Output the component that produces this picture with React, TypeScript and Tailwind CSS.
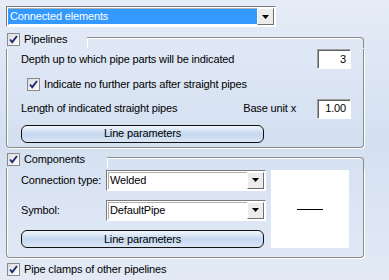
import React from "react";

const font = { fontFamily: '"Liberation Sans", Arial, sans-serif' };

const Check = ({ checked = true }: { checked?: boolean }) => (
    <span className="flex h-[13px] w-[13px] shrink-0 items-center justify-center border border-[#8a8a8a] bg-gradient-to-br from-[#dcdcdc] to-white">
        {checked && (
            <svg width="9" height="9" viewBox="0 0 9 9">
                <path d="M1 4.5 L3.2 7.2 L8 1" fill="none" stroke="#1f2a7a" strokeWidth="1.9" />
            </svg>
        )}
    </span>
);

const Arrow = () => (
    <span className="flex h-[17px] w-[17px] shrink-0 items-center justify-center border border-t-white border-l-white border-b-[#6f6f6f] border-r-[#6f6f6f] bg-[#ececec]">
        <svg width="7" height="4" viewBox="0 0 7 4">
            <path d="M0 0 H7 L3.5 4 Z" fill="#000" />
        </svg>
    </span>
);

const Combo = ({ value, width, selected }: { value: string; width: string; selected?: boolean }) => (
    <div className={`flex items-center border border-t-[#7a7a7a] border-l-[#7a7a7a] border-b-white border-r-white bg-white p-px ${width}`}>
        <div className="flex h-[17px] flex-1 items-center shadow-[inset_1px_1px_0_#b0b0b0]">
            <span className={`flex h-[15px] flex-1 items-center px-[2px] ${selected ? "bg-[#3399ff] text-white" : ""}`}>{value}</span>
        </div>
        <Arrow />
    </div>
);

const NumInput = ({ value }: { value: string }) => (
    <div className="flex h-[20px] w-[34px] items-center justify-end border border-t-[#a0a0a0] border-l-[#a0a0a0] border-b-white border-r-white bg-white pr-[4px] shadow-[inset_1px_1px_0_#606060]">
        {value}
    </div>
);

const LineButton = () => (
    <div className="flex h-[18px] w-[243px] items-center justify-center rounded-[6px] border border-[#111] bg-gradient-to-b from-[#f3f7fc] via-[#c4d7ef] to-[#dbe6f5]">
        Line parameters
    </div>
);

const GroupHeader = ({ label, labelWidth }: { label: string; labelWidth: string }) => (
    <div className="flex h-[18px]">
        <div className={`flex items-center gap-[4px] pl-[1px] ${labelWidth}`}>
            <Check />
            <span>{label}</span>
        </div>
        <div className="mt-[7px] flex-1 rounded-tr-[4px] border-t border-r border-[#8c8c8c] shadow-[inset_1px_1px_0_white]" />
    </div>
);

export default function App() {
    return (
        <div
            className="h-[280px] w-[389px] overflow-hidden bg-gradient-to-b from-[#e5ecf7] via-[#d4e0f1] to-[#e3eaf6] pl-[6px] pt-[6px] text-[11px] tracking-[-0.15px] text-black"
            style={font}
        >
            <Combo value="Connected elements" width="w-[270px]" selected />

            <div className="mt-[3px] w-[358px]">
                <GroupHeader label="Pipelines" labelWidth="w-[81px]" />
                <div className="h-[99px] rounded-b-[4px] border-x border-b border-[#8c8c8c] pl-[14px] pr-[12px] shadow-[1px_1px_0_white,inset_1px_0_0_white]">
                    <div className="mt-px flex h-[20px] items-center justify-between">
                        <span>Depth up to which pipe parts will be indicated</span>
                        <NumInput value="3" />
                    </div>
                    <div className="mt-[7px] flex items-center gap-[4px] pl-[6px]">
                        <Check />
                        <span>Indicate no further parts after straight pipes</span>
                    </div>
                    <div className="mt-[6px] flex h-[20px] items-center">
                        <span className="flex-1">Length of indicated straight pipes</span>
                        <span className="mr-[21px]">Base unit x</span>
                        <NumInput value="1.00" />
                    </div>
                    <div className="mt-[6px]">
                        <LineButton />
                    </div>
                </div>
            </div>

            <div className="mt-[2px] w-[358px]">
                <GroupHeader label="Components" labelWidth="w-[101px]" />
                <div className="flex h-[90px] gap-[5px] rounded-b-[4px] border-x border-b border-[#8c8c8c] pl-[14px] pt-[2px] shadow-[1px_1px_0_white,inset_1px_0_0_white]">
                    <div className="flex flex-col">
                        <div className="flex h-[20px] items-center">
                            <span className="w-[85px]">Connection type:</span>
                            <Combo value="Welded" width="w-[160px]" />
                        </div>
                        <div className="mt-[10px] flex h-[20px] items-center">
                            <span className="w-[85px]">Symbol:</span>
                            <Combo value="DefaultPipe" width="w-[160px]" />
                        </div>
                        <div className="mt-[10px]">
                            <LineButton />
                        </div>
                    </div>
                    <div className="flex h-[78px] w-[78px] items-center justify-center bg-white">
                        <div className="mt-[1px] h-px w-[26px] bg-black" />
                    </div>
                </div>
            </div>

            <div className="mt-[3px] flex items-center gap-[4px] pl-[1px]">
                <Check />
                <span>Pipe clamps of other pipelines</span>
            </div>
        </div>
    );
}
